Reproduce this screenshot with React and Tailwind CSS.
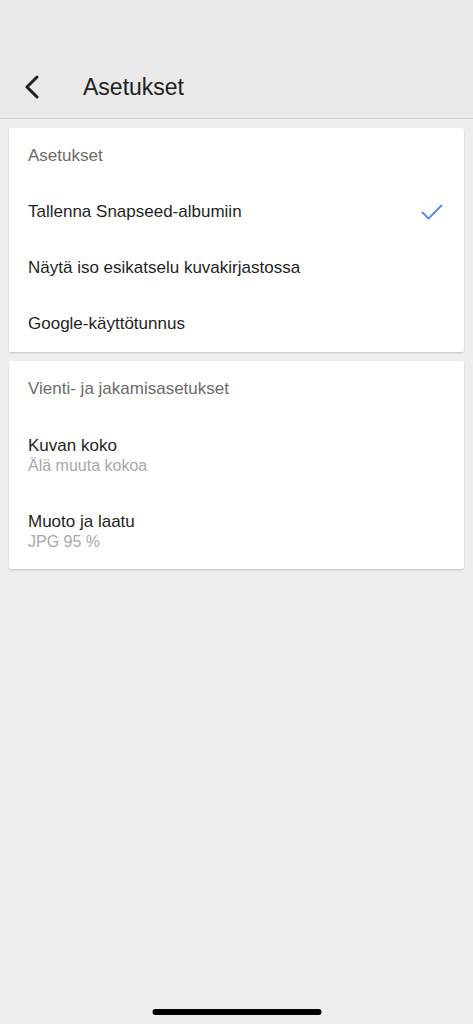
const font = { fontFamily: '"Liberation Sans", Arial, sans-serif' }

function Row({ title, sub, checked }) {
  return (
    <div className={`flex items-center justify-between pl-[19px] pr-[21px] ${sub ? 'h-[76px]' : 'h-[56px]'}`}>
      <div className="flex flex-col">
        <span className="text-[17px] leading-[20px] text-[#1f1f1f]">{title}</span>
        {sub && <span className="text-[16px] leading-[19px] text-[#a8a8a8]">{sub}</span>}
      </div>
      {checked && (
        <svg width="22" height="16" viewBox="0 0 22 16" fill="none">
          <path d="M1.5 8.5 L7.5 14.5 L20.5 1.5" stroke="#5b8def" strokeWidth="2" strokeLinecap="round" strokeLinejoin="round" />
        </svg>
      )}
    </div>
  )
}

function Card({ heading, children }) {
  return (
    <div className="mx-[9px] bg-white rounded-[2px] shadow-[0_1px_2px_rgba(0,0,0,0.18)]">
      <div className="h-[56px] flex items-center pl-[19px] text-[17px] text-[#6b6b6b]">{heading}</div>
      {children}
    </div>
  )
}

export default function App() {
  return (
    <div className="min-h-[1024px] bg-[#eeeeee] flex flex-col relative" style={font}>
      <header className="h-[119px] bg-[#e9e9e9] border-b border-[#cfcfcf] flex items-end pb-[19px]">
        <div className="flex items-center h-[24px]">
          <svg className="ml-[24px]" width="16" height="24" viewBox="0 0 16 24" fill="none">
            <path d="M13 2 L3 12 L13 22" stroke="#222" strokeWidth="3" strokeLinecap="round" strokeLinejoin="round" />
          </svg>
          <h1 className="ml-[43px] text-[23px] text-[#222]">Asetukset</h1>
        </div>
      </header>

      <div className="pt-[9px] flex flex-col gap-[9px]">
        <Card heading="Asetukset">
          <Row title="Tallenna Snapseed-albumiin" checked />
          <Row title="Näytä iso esikatselu kuvakirjastossa" />
          <Row title="Google-käyttötunnus" />
        </Card>
        <Card heading="Vienti- ja jakamisasetukset">
          <Row title="Kuvan koko" sub="Älä muuta kokoa" />
          <Row title="Muoto ja laatu" sub="JPG 95 %" />
        </Card>
      </div>

      <div className="absolute bottom-[9px] left-1/2 -translate-x-1/2 w-[169px] h-[6px] rounded-full bg-black" />
    </div>
  )
}
